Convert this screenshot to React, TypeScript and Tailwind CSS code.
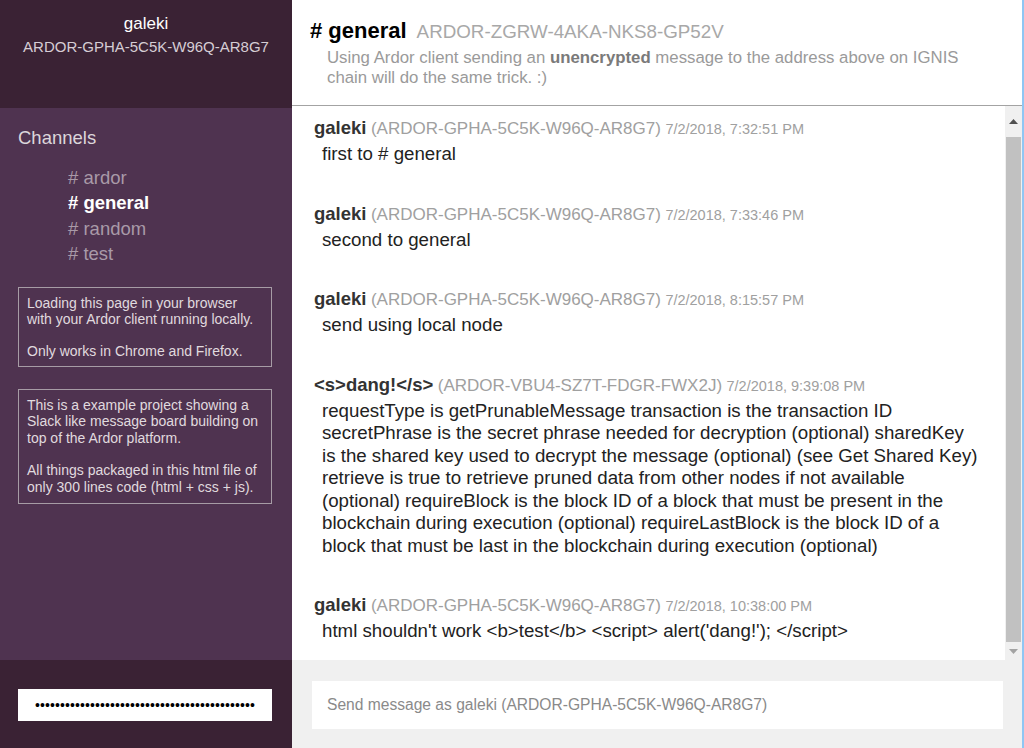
import type { ReactNode } from 'react';

const FONT = { fontFamily: '"Liberation Sans", Arial, sans-serif' };

interface Message {
  name: ReactNode;
  account: string;
  time: string;
  body: string;
}

const messages: Message[] = [
  {
    name: 'galeki',
    account: 'ARDOR-GPHA-5C5K-W96Q-AR8G7',
    time: '7/2/2018, 7:32:51 PM',
    body: 'first to # general',
  },
  {
    name: 'galeki',
    account: 'ARDOR-GPHA-5C5K-W96Q-AR8G7',
    time: '7/2/2018, 7:33:46 PM',
    body: 'second to general',
  },
  {
    name: 'galeki',
    account: 'ARDOR-GPHA-5C5K-W96Q-AR8G7',
    time: '7/2/2018, 8:15:57 PM',
    body: 'send using local node',
  },
  {
    name: '<s>dang!</s>',
    account: 'ARDOR-VBU4-SZ7T-FDGR-FWX2J',
    time: '7/2/2018, 9:39:08 PM',
    body: 'requestType is getPrunableMessage transaction is the transaction ID secretPhrase is the secret phrase needed for decryption (optional) sharedKey is the shared key used to decrypt the message (optional) (see Get Shared Key) retrieve is true to retrieve pruned data from other nodes if not available (optional) requireBlock is the block ID of a block that must be present in the blockchain during execution (optional) requireLastBlock is the block ID of a block that must be last in the blockchain during execution (optional)',
  },
  {
    name: 'galeki',
    account: 'ARDOR-GPHA-5C5K-W96Q-AR8G7',
    time: '7/2/2018, 10:38:00 PM',
    body: "html shouldn't work <b>test</b> <script> alert('dang!'); </script>",
  },
];

const channels = ['ardor', 'general', 'random', 'test'];

function Sidebar() {
  return (
    <div className="w-[292px] shrink-0 flex flex-col">
      <div className="h-[108px] bg-[#3a2234] flex flex-col items-center pt-[14px]">
        <div className="text-[17px] leading-[20px] text-white">galeki</div>
        <div className="text-[15px] leading-[18px] text-[#d6cdd4] mt-[4px]">ARDOR-GPHA-5C5K-W96Q-AR8G7</div>
      </div>

      <div className="flex-1 bg-[#4f3350] px-[18px] pt-[19px]">
        <div className="text-[18.5px] leading-[21px] text-[#dcd6db]">Channels</div>
        <ul className="pl-[50px] mt-[17px]">
          {channels.map((c) => (
            <li
              key={c}
              className={
                c === 'general'
                  ? 'text-[18.5px] leading-[25.3px] text-white font-bold'
                  : 'text-[18.5px] leading-[25.3px] text-[#a99aa8]'
              }
            >
              # {c}
            </li>
          ))}
        </ul>

        <div className="mt-[21px] w-[254px] border border-[#a69ca5] px-[8px] pt-[7px] pb-[7px] text-[14px] leading-[16px] text-[#e0dadf]">
          <p>Loading this page in your browser with your Ardor client running locally.</p>
          <p className="mt-[16px]">Only works in Chrome and Firefox.</p>
        </div>

        <div className="mt-[22px] w-[254px] border border-[#a69ca5] px-[8px] pt-[7px] pb-[8px] text-[14px] leading-[16.3px] text-[#e0dadf]">
          <p>This is a example project showing a Slack like message board building on top of the Ardor platform.</p>
          <p className="mt-[16.3px]">All things packaged in this html file of only 300 lines code (html + css + js).</p>
        </div>
      </div>

      <div className="h-[88px] bg-[#3a2234] px-[18px] pt-[29px]">
        <div className="w-[254px] h-[32px] bg-white pl-[17px] flex items-center text-[14px] text-black tracking-[0.1px] overflow-hidden whitespace-nowrap">
          {'•'.repeat(44)}
        </div>
      </div>
    </div>
  );
}

function Header() {
  return (
    <div className="h-[106px] shrink-0 bg-white border-b border-[#a3a3a3] pl-[18px] pt-[17px]">
      <div className="flex items-baseline leading-[28px]">
        <span className="text-[22px] font-bold text-black"># general</span>
        <span className="text-[18.8px] text-[#a8a8a8] ml-[10px]">ARDOR-ZGRW-4AKA-NKS8-GP52V</span>
      </div>
      <p className="mt-[2px] ml-[17px] w-[665px] text-[16.8px] leading-[20px] text-[#9a9a9a]">
        Using Ardor client sending an <b className="text-[#7a7a7a]">unencrypted</b> message to the address above on IGNIS chain will do the same trick. :)
      </p>
    </div>
  );
}

function Scrollbar() {
  return (
    <div className="w-[17px] shrink-0 bg-[#f0f0f0] flex flex-col items-center">
      <div className="h-[31px] w-full flex items-center justify-center">
        <svg width="9" height="5" viewBox="0 0 9 5">
          <path d="M4.5 0 L9 5 L0 5 Z" fill="#505050" />
        </svg>
      </div>
      <div className="flex-1 w-[15px] bg-[#c1c1c1]" />
      <div className="h-[18px] w-full flex items-center justify-center">
        <svg width="9" height="5" viewBox="0 0 9 5">
          <path d="M0 0 L9 0 L4.5 5 Z" fill="#a3a3a3" />
        </svg>
      </div>
    </div>
  );
}

function MessageList() {
  return (
    <div className="flex-1 flex min-h-0 bg-white">
      <div className="flex-1 pl-[22px] pt-[11px] overflow-hidden">
        {messages.map((m, i) => (
          <div key={i} className="mb-[37px]">
            <div className="leading-[21px] whitespace-nowrap">
              <span className="text-[18.5px] font-bold text-[#333]">{m.name}</span>{' '}
              <span className="text-[17px] text-[#a0a0a0]">({m.account})</span>{' '}
              <span className="text-[14.5px] text-[#a0a0a0]">{m.time}</span>
            </div>
            <p className="mt-[3px] pl-[8px] w-[667px] text-[18.7px] leading-[22.5px] text-[#222]">{m.body}</p>
          </div>
        ))}
      </div>
      <Scrollbar />
    </div>
  );
}

function Composer() {
  return (
    <div className="h-[88px] shrink-0 bg-[#f0f0f0] pl-[20px] pr-[19px] pt-[21px]">
      <div className="h-[48px] bg-white pl-[15px] flex items-center text-[15.6px] text-[#8a8a8a]">
        Send message as galeki (ARDOR-GPHA-5C5K-W96Q-AR8G7)
      </div>
    </div>
  );
}

export default function App() {
  return (
    <div className="w-[1024px] h-[748px] flex overflow-hidden" style={FONT}>
      <Sidebar />
      <div className="flex-1 flex flex-col min-w-0 border-r-2 border-[#8fc6f3]">
        <Header />
        <MessageList />
        <Composer />
      </div>
    </div>
  );
}
